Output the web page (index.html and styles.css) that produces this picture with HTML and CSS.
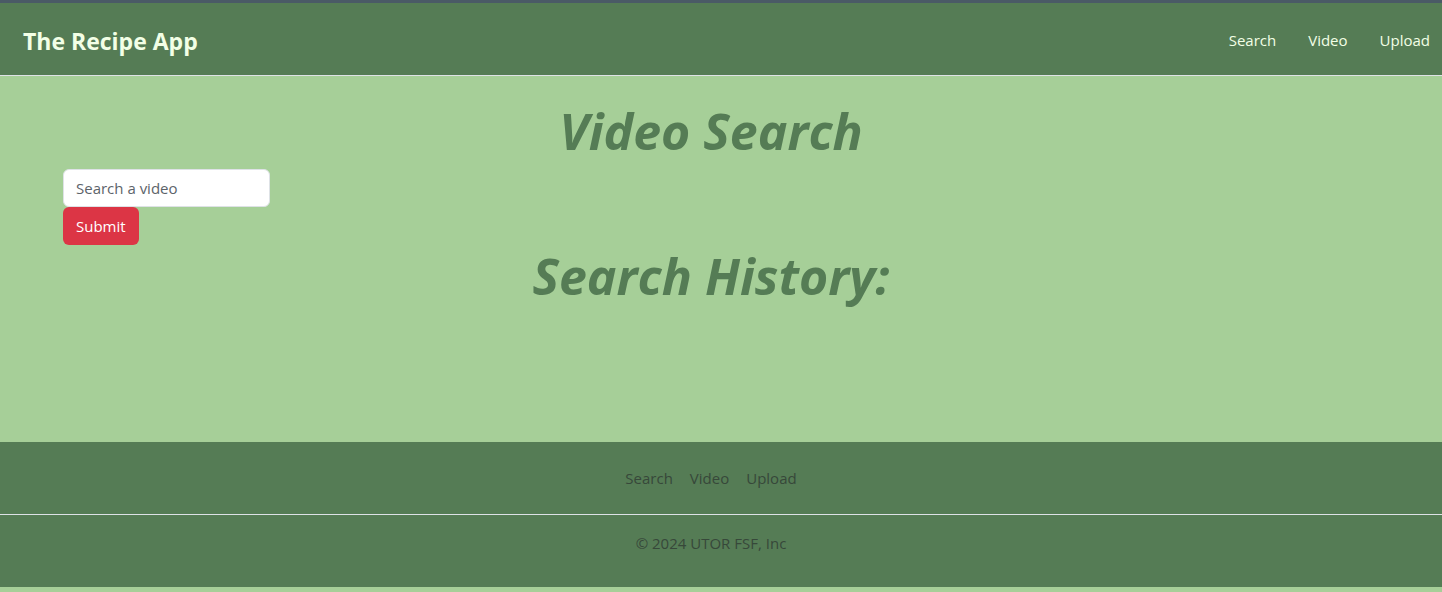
FILE: index.html
```html
<!DOCTYPE html>
<html lang="en">
<head>
<meta charset="utf-8">
<title>The Recipe App</title>
<link rel="stylesheet" href="styles.css">
</head>
<body>
<div class="topstrip"></div>
<header class="navbar">
  <a class="brand" href="#">The Recipe App</a>
  <nav class="navlinks">
    <a href="#">Search</a>
    <a href="#">Video</a>
    <a href="#">Upload</a>
  </nav>
</header>
<main class="main">
  <h1 class="title">Video Search</h1>
  <form class="search-form">
    <input class="search-input" type="text" placeholder="Search a video">
    <button class="submit-btn" type="button">Submit</button>
  </form>
  <h2 class="history">Search History:</h2>
</main>
<footer class="footer">
  <nav class="footer-links">
    <a href="#">Search</a>
    <a href="#">Video</a>
    <a href="#">Upload</a>
  </nav>
  <p class="copyright">© 2024 UTOR FSF, Inc</p>
</footer>
<div class="bottomstrip"></div>
</body>
</html>
```
FILE: styles.css
```css
* { box-sizing: border-box; }
html, body { margin: 0; padding: 0; }
body {
  font-family: "Open Sans", "Noto Sans", sans-serif;
  font-size: 16px;
  background: #a6cf98;
  color: #212529;
}
a { text-decoration: none; }
.topstrip { height: 3px; background: #4a5a66; }
.navbar {
  height: 73px;
  background: #557c55;
  border-bottom: 1px solid #dee2e6;
  display: flex;
  align-items: center;
  justify-content: space-between;
  padding: 2px 12px 0 23px;
}
.brand {
  color: #f2ffe6;
  font-weight: 700;
  font-size: 23px;
  padding-top: 2px;
}
.navlinks { display: flex; gap: 32px; }
.navlinks a { color: #f2ffe6; font-size: 15px; }
.main {
  height: 366px;
  padding: 25px 20px 0 0;
}
.title, .history {
  margin: 0;
  text-align: center;
  color: #557c55;
  font-style: italic;
  font-weight: 700;
  font-size: 50px;
  line-height: 1.2;
}
.search-form {
  display: flex;
  flex-direction: column;
  align-items: flex-start;
  padding-left: 63px;
  margin-top: 8px;
}
.search-input {
  width: 207px;
  height: 38px;
  border: 1px solid #dee2e6;
  border-radius: 6px;
  padding: 0 12px;
  font-family: inherit;
  font-size: 15px;
  color: #212529;
  background: #fff;
}
.search-input::placeholder { color: #5c636a; }
.submit-btn {
  height: 38px;
  padding: 0 13px;
  border: none;
  border-radius: 6px;
  background: #dc3545;
  color: #fff;
  font-family: inherit;
  font-size: 15px;
}
.history { margin-top: 1px; }
.footer {
  height: 145px;
  background: #557c55;
  padding-top: 26px;
}
.footer-links {
  display: flex;
  justify-content: center;
  gap: 17px;
  padding: 0 20px 26px 0;
  border-bottom: 1px solid #dee2e6;
}
.footer-links a { color: #37483a; font-size: 15px; line-height: 20px; }
.copyright {
  margin: 18px 0 0;
  padding-right: 20px;
  text-align: center;
  color: #37483a;
  font-size: 15px;
}
.bottomstrip { height: 5px; background: #a6cf98; }
```
